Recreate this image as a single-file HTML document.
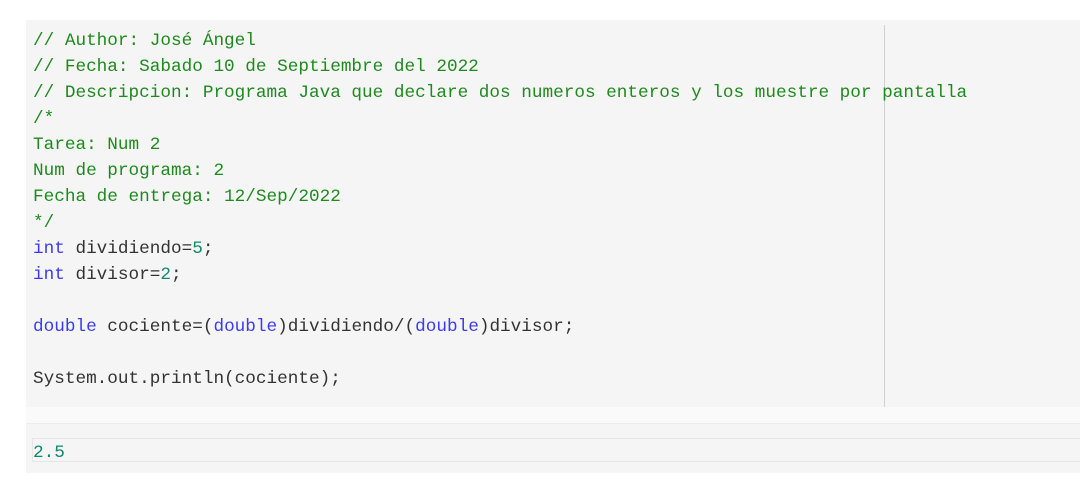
<!DOCTYPE html>
<html><head><meta charset="utf-8"><style>
html,body{margin:0;padding:0;background:#fff;width:1080px;height:483px;overflow:hidden}
.code{position:absolute;left:26px;top:20px;width:1054px;height:387px;background:#f5f5f5}
.vl{position:absolute;left:884px;top:25px;width:1px;height:382px;background:#d0d0d0}
pre{position:absolute;left:33px;top:28px;margin:0;font-family:"Liberation Mono",monospace;font-size:17.7px;line-height:26px;color:#333;white-space:pre}
.c{color:#1e8a1e}.k{color:#3b3bef}.n{color:#0f8a6a}
.band{position:absolute;left:26px;top:407px;width:1054px;height:16px;background:#fafafa;border-bottom:1px solid #ececec}
.out{position:absolute;left:26px;top:424px;width:1054px;height:49px;background:#f5f5f5}
.ob{position:absolute;left:32px;top:438px;width:1048px;height:24px;border:1px solid #e6e6e6;border-right:none;box-sizing:border-box}
.ot{position:absolute;left:33px;top:441px;font-family:"Liberation Mono",monospace;font-size:17.7px;line-height:24px;color:#0f8a6a}
</style></head><body>
<div class="code"></div>
<div class="vl"></div>
<pre><span class="c">// Author: José Ángel
// Fecha: Sabado 10 de Septiembre del 2022
// Descripcion: Programa Java que declare dos numeros enteros y los muestre por pantalla
/*
Tarea: Num 2
Num de programa: 2
Fecha de entrega: 12/Sep/2022
*/</span>
<span class="k">int</span> dividiendo=<span class="n">5</span>;
<span class="k">int</span> divisor=<span class="n">2</span>;

<span class="k">double</span> cociente=(<span class="k">double</span>)dividiendo/(<span class="k">double</span>)divisor;

System.out.println(cociente);</pre>
<div class="band"></div>
<div class="out"></div>
<div class="ob"></div>
<div class="ot">2.5</div>
</body></html>
